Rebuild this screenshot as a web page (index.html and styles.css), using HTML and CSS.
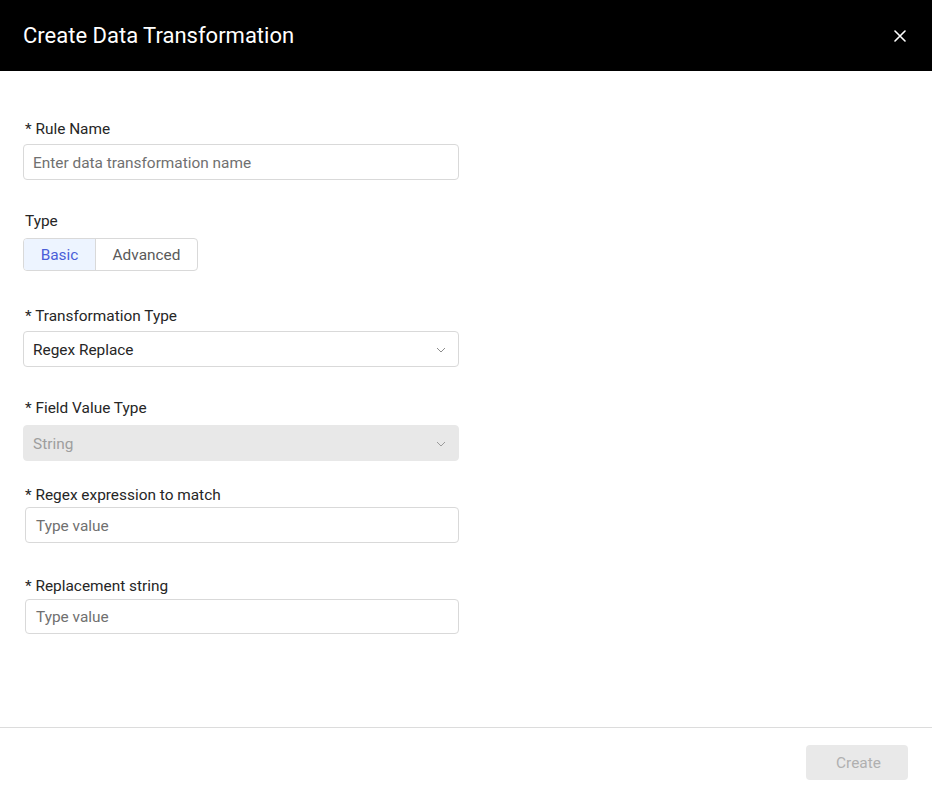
FILE: index.html
```html
<!DOCTYPE html>
<html>
<head>
<meta charset="utf-8">
<link rel="stylesheet" href="styles.css">
</head>
<body>
<div class="modal">
  <header class="header">
    <h1 class="title">Create Data Transformation</h1>
    <button class="close" aria-label="Close">
      <svg width="12" height="12" viewBox="0 0 12 12"><path d="M1 1L11 11M11 1L1 11" stroke="#fff" stroke-width="1.6" stroke-linecap="round"/></svg>
    </button>
  </header>
  <main class="body">
    <div class="field f-rule">
      <label class="label">* Rule Name</label>
      <div class="input"><span class="placeholder">Enter data transformation name</span></div>
    </div>
    <div class="field f-type">
      <label class="label">Type</label>
      <div class="segmented">
        <span class="seg active">Basic</span>
        <span class="seg">Advanced</span>
      </div>
    </div>
    <div class="field f-trans">
      <label class="label">* Transformation Type</label>
      <div class="input select"><span class="value">Regex Replace</span>
        <svg class="chev" width="10" height="6" viewBox="0 0 10 6"><path d="M1 1L5 5L9 1" fill="none" stroke="#8c8c8c" stroke-width="1"/></svg>
      </div>
    </div>
    <div class="field f-fvt">
      <label class="label">* Field Value Type</label>
      <div class="input select disabled"><span class="value">String</span>
        <svg class="chev" width="10" height="6" viewBox="0 0 10 6"><path d="M1 1L5 5L9 1" fill="none" stroke="#9a9a9a" stroke-width="1"/></svg>
      </div>
    </div>
    <div class="field f-regex">
      <label class="label">* Regex expression to match</label>
      <div class="input inset"><span class="placeholder">Type value</span></div>
    </div>
    <div class="field f-repl">
      <label class="label">* Replacement string</label>
      <div class="input inset short"><span class="placeholder">Type value</span></div>
    </div>
  </main>
  <footer class="footer">
    <button class="create">Create</button>
  </footer>
</div>
</body>
</html>
```
FILE: styles.css
```css
* { box-sizing: border-box; }
html, body { margin: 0; padding: 0; background: #fff; }
body { font-family: Roboto, "Noto Sans", sans-serif; color: #262626; width: 932px; height: 788px; overflow: hidden; }
.modal { display: flex; flex-direction: column; height: 788px; }
.header { height: 71px; background: #000; display: flex; align-items: center; justify-content: space-between; padding: 0 26px 0 23px; flex: none; }
.title { margin: 0; font-size: 22px; font-weight: 400; color: #fff; line-height: 28px; padding-top: 1px; }
.close { background: none; border: 0; padding: 0; width: 12px; height: 12px; display: flex; cursor: pointer; }
.body { flex: 1; padding: 48px 0 0 23px; display: flex; flex-direction: column; }
.field { display: flex; flex-direction: column; width: 436px; }
.label { font-size: 15.4px; line-height: 20px; color: #262626; padding-left: 2px; margin-bottom: 5px; }
.input { height: 36px; border: 1px solid #d9d9d9; border-radius: 4px; display: flex; align-items: center; padding: 1px 9px 0; font-size: 15.4px; background: #fff; }
.placeholder { color: #707070; }
.value { color: #262626; flex: 1; }
.select { padding-right: 12px; }
.disabled { background: #e8e8e8; border-color: #e8e8e8; }
.disabled .value { color: #9e9e9e; }
.inset { margin-left: 2px; width: 434px; padding-left: 10px; }
.short { height: 35px; }
.f-type { margin-top: 31px; }
.f-type .label { margin-bottom: 7px; }
.f-trans { margin-top: 35px; }
.f-fvt { margin-top: 31px; }
.f-fvt .label { margin-bottom: 7px; }
.f-regex { margin-top: 24px; }
.f-regex .label { margin-bottom: 2px; }
.f-repl { margin-top: 33px; }
.f-repl .label { margin-bottom: 3px; }
.segmented { display: flex; height: 33px; width: 175px; border: 1px solid #d9d9d9; border-radius: 4px; overflow: hidden; }
.seg { display: flex; align-items: center; justify-content: center; font-size: 15.4px; color: #595959; }
.seg:first-child { width: 72px; border-right: 1px solid #d9d9d9; }
.seg:last-child { flex: 1; }
.seg.active { background: #edf4ff; color: #4a5ed8; }
.footer { flex: none; border-top: 1px solid #dcdcdc; height: 61px; display: flex; justify-content: flex-end; align-items: flex-start; padding: 17px 24px 0 0; margin-bottom: 0; }
.create { width: 102px; height: 35px; border: 0; border-radius: 4px; background: #e9e9e9; color: #b0b0b0; font-family: Roboto, sans-serif; font-size: 15.4px; padding: 0 0 0 3px; }
```
